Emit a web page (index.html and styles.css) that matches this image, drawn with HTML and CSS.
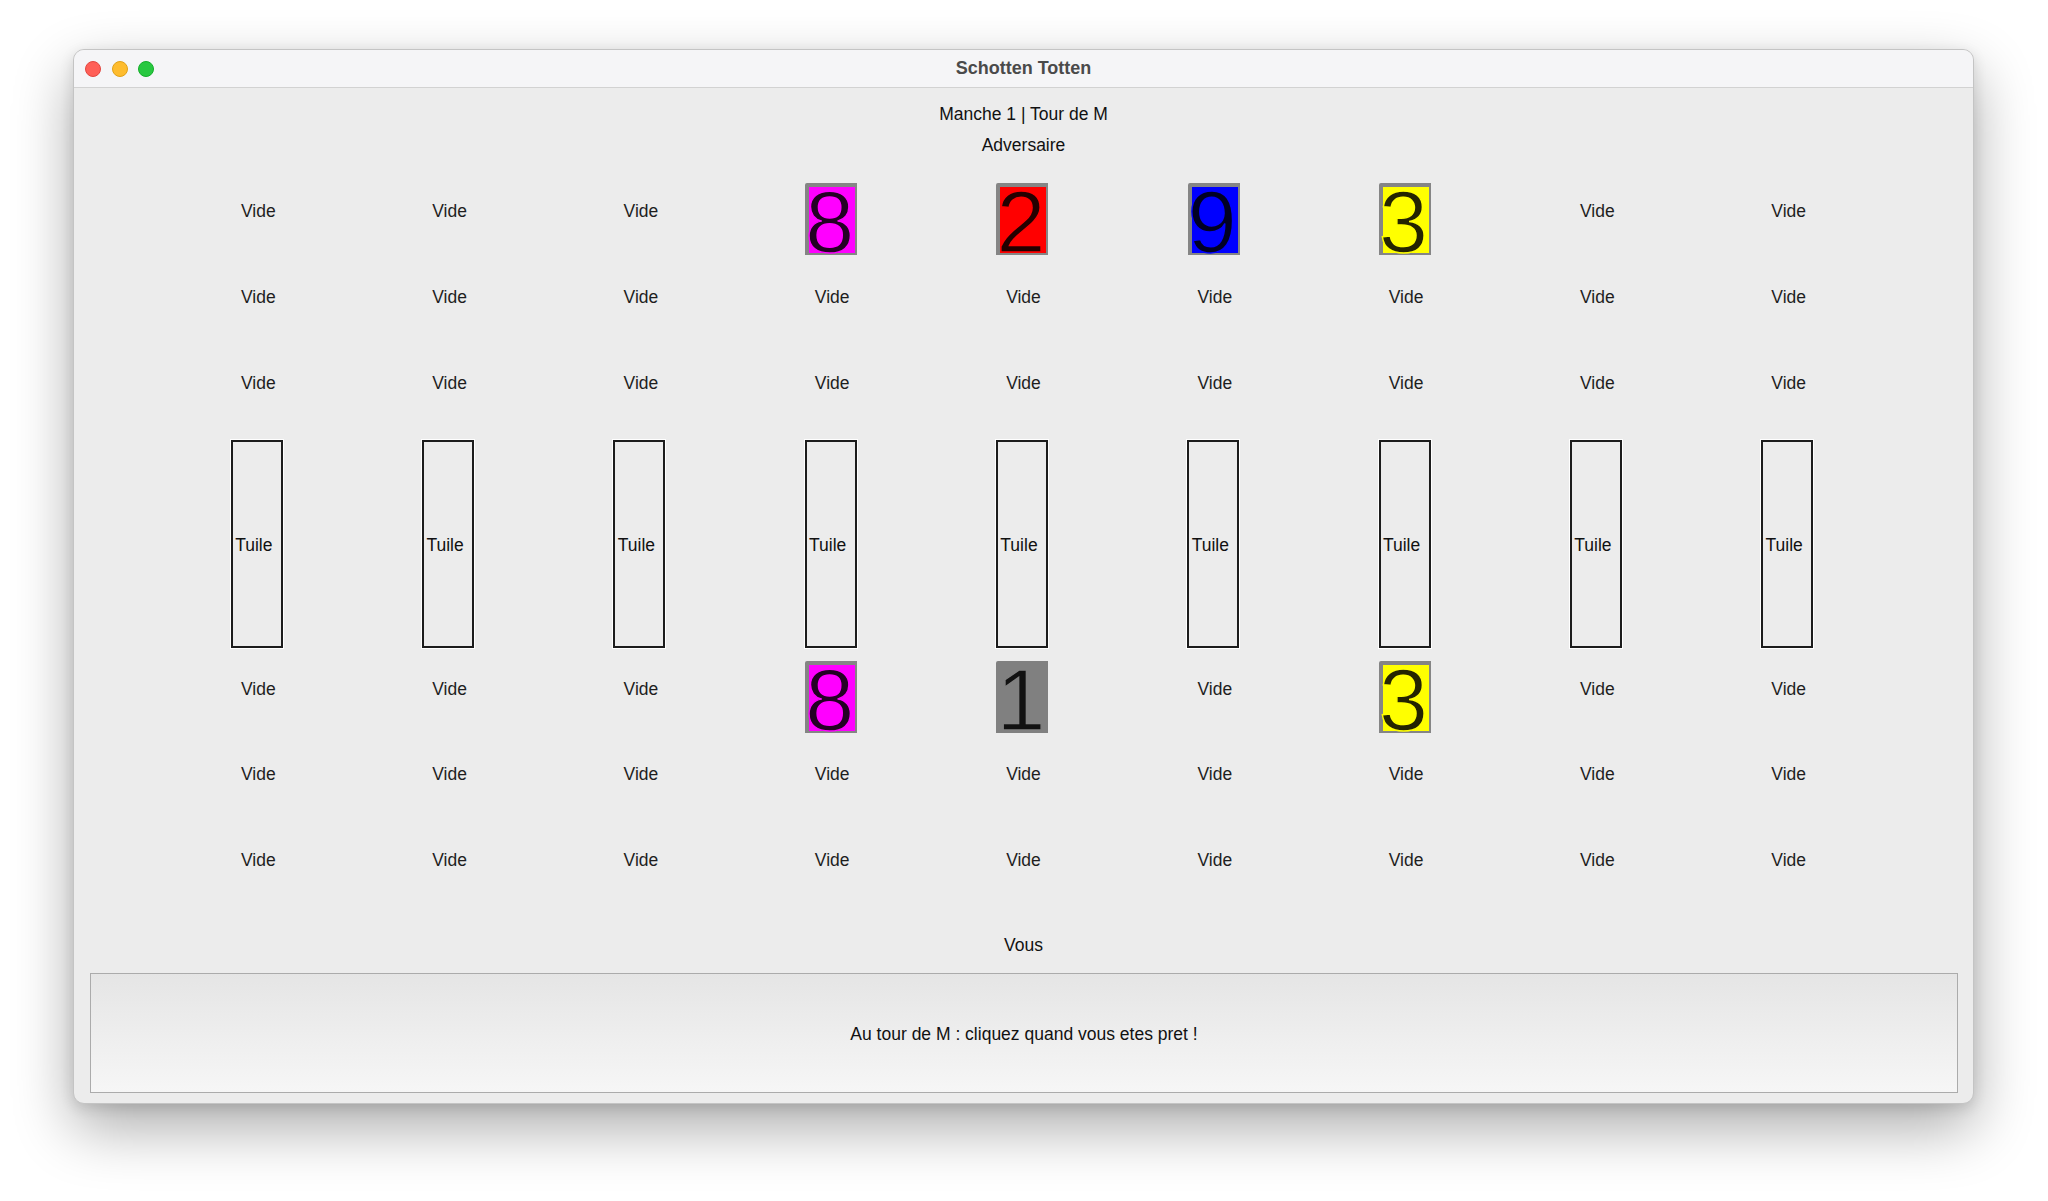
FILE: index.html
```html
<!DOCTYPE html>
<html lang="fr">
<head>
<meta charset="utf-8">
<title>Schotten Totten</title>
<link rel="stylesheet" href="styles.css">
</head>
<body>
<div class="window">
  <div class="titlebar">
    <div class="lights">
      <span class="light red"></span>
      <span class="light yellow"></span>
      <span class="light green"></span>
    </div>
    <div class="title">Schotten Totten</div>
    <div></div>
  </div>
  <div class="content">
    <div class="line">Manche 1 | Tour de M</div>
    <div class="line">Adversaire</div>

    <div class="board opp">
      <div class="cell"><span class="vide">Vide</span></div>
      <div class="cell"><span class="vide">Vide</span></div>
      <div class="cell"><span class="vide">Vide</span></div>
      <div class="cell"><div class="card magenta"><span>8</span></div></div>
      <div class="cell"><div class="card red"><span>2</span></div></div>
      <div class="cell"><div class="card blue"><span>9</span></div></div>
      <div class="cell"><div class="card yellow"><span>3</span></div></div>
      <div class="cell"><span class="vide">Vide</span></div>
      <div class="cell"><span class="vide">Vide</span></div>

      <div class="cell"><span class="vide">Vide</span></div>
      <div class="cell"><span class="vide">Vide</span></div>
      <div class="cell"><span class="vide">Vide</span></div>
      <div class="cell"><span class="vide">Vide</span></div>
      <div class="cell"><span class="vide">Vide</span></div>
      <div class="cell"><span class="vide">Vide</span></div>
      <div class="cell"><span class="vide">Vide</span></div>
      <div class="cell"><span class="vide">Vide</span></div>
      <div class="cell"><span class="vide">Vide</span></div>

      <div class="cell"><span class="vide">Vide</span></div>
      <div class="cell"><span class="vide">Vide</span></div>
      <div class="cell"><span class="vide">Vide</span></div>
      <div class="cell"><span class="vide">Vide</span></div>
      <div class="cell"><span class="vide">Vide</span></div>
      <div class="cell"><span class="vide">Vide</span></div>
      <div class="cell"><span class="vide">Vide</span></div>
      <div class="cell"><span class="vide">Vide</span></div>
      <div class="cell"><span class="vide">Vide</span></div>
    </div>

    <div class="board tiles">
      <div class="tcell"><div class="tile">Tuile</div></div>
      <div class="tcell"><div class="tile">Tuile</div></div>
      <div class="tcell"><div class="tile">Tuile</div></div>
      <div class="tcell"><div class="tile">Tuile</div></div>
      <div class="tcell"><div class="tile">Tuile</div></div>
      <div class="tcell"><div class="tile">Tuile</div></div>
      <div class="tcell"><div class="tile">Tuile</div></div>
      <div class="tcell"><div class="tile">Tuile</div></div>
      <div class="tcell"><div class="tile">Tuile</div></div>
    </div>

    <div class="board me">
      <div class="cell"><span class="vide">Vide</span></div>
      <div class="cell"><span class="vide">Vide</span></div>
      <div class="cell"><span class="vide">Vide</span></div>
      <div class="cell"><div class="card magenta"><span>8</span></div></div>
      <div class="cell"><div class="card gray"><span>1</span></div></div>
      <div class="cell"><span class="vide">Vide</span></div>
      <div class="cell"><div class="card yellow"><span>3</span></div></div>
      <div class="cell"><span class="vide">Vide</span></div>
      <div class="cell"><span class="vide">Vide</span></div>

      <div class="cell"><span class="vide">Vide</span></div>
      <div class="cell"><span class="vide">Vide</span></div>
      <div class="cell"><span class="vide">Vide</span></div>
      <div class="cell"><span class="vide">Vide</span></div>
      <div class="cell"><span class="vide">Vide</span></div>
      <div class="cell"><span class="vide">Vide</span></div>
      <div class="cell"><span class="vide">Vide</span></div>
      <div class="cell"><span class="vide">Vide</span></div>
      <div class="cell"><span class="vide">Vide</span></div>

      <div class="cell"><span class="vide">Vide</span></div>
      <div class="cell"><span class="vide">Vide</span></div>
      <div class="cell"><span class="vide">Vide</span></div>
      <div class="cell"><span class="vide">Vide</span></div>
      <div class="cell"><span class="vide">Vide</span></div>
      <div class="cell"><span class="vide">Vide</span></div>
      <div class="cell"><span class="vide">Vide</span></div>
      <div class="cell"><span class="vide">Vide</span></div>
      <div class="cell"><span class="vide">Vide</span></div>
    </div>

    <div class="line vous">Vous</div>

    <div class="panel">Au tour de M : cliquez quand vous etes pret !</div>
  </div>
</div>
</body>
</html>
```

FILE: styles.css
```css
html, body {
  margin: 0;
  padding: 0;
  background: #ffffff;
  width: 2048px;
  height: 1201px;
  overflow: hidden;
  font-family: "Liberation Sans", Arial, sans-serif;
}

.window {
  margin: 49px 0 0 73px;
  width: 1899px;
  height: 1053px;
  border: 1px solid #c4c4c4;
  border-radius: 11px;
  background: #ececec;
  overflow: hidden;
  box-shadow: 0 24px 60px rgba(0, 0, 0, 0.33), 0 4px 14px rgba(0, 0, 0, 0.12);
  display: flex;
  flex-direction: column;
}

.titlebar {
  height: 37px;
  border-bottom: 1px solid #d2d2d2;
  background: #f5f5f7;
  display: grid;
  grid-template-columns: 1fr auto 1fr;
  align-items: center;
}

.lights {
  display: flex;
  gap: 10.5px;
  padding-left: 11px;
  align-items: center;
  padding-top: 1px;
}

.light {
  width: 16px;
  height: 16px;
  border-radius: 50%;
  box-sizing: border-box;
  display: block;
}

.light.red { background: #ff5f57; border: 1px solid #e2463f; }
.light.yellow { background: #febc2e; border: 1px solid #e1a116; }
.light.green { background: #28c840; border: 1px solid #14ae2a; }

.title {
  font-weight: bold;
  font-size: 18px;
  color: #4a4a4a;
}

.content {
  flex: 1;
  display: flex;
  flex-direction: column;
  padding-top: 11.3px;
}

.line {
  height: 31px;
  line-height: 31px;
  text-align: center;
  font-size: 17.5px;
  color: #111;
}

.board {
  display: grid;
  grid-template-columns: repeat(9, 191.3px);
  justify-content: center;
}

.opp { margin-top: 22.2px; }
.me { margin-top: 12.3px; }

.cell {
  height: 85.6px;
  display: flex;
  flex-direction: column;
  align-items: center;
}

.vide {
  margin-top: 18px;
  line-height: 20px;
  font-size: 17.5px;
  color: #1e1e1e;
}

.card {
  width: 52px;
  height: 72px;
  box-sizing: border-box;
  border-style: solid;
  border-color: #858585;
  border-width: 4px 2px 2px 4px;
  border-radius: 2px 0 0 0;
  margin-right: 2px;
}

.card span {
  display: block;
  margin-left: -4px;
  font-size: 88px;
  line-height: 66px;
  transform: translateY(2px);
  color: rgba(0, 0, 0, 0.86);
}

.card.magenta { background: #ff00ff; }
.card.red { background: #ff0000; }
.card.blue { background: #0000ff; }
.card.yellow { background: #ffff00; }
.card.gray { background: #808080; border-color: #808080; }

.card.magenta span { -webkit-text-stroke: 1.4px #ff00ff; }
.card.red span { -webkit-text-stroke: 1.4px #ff0000; }
.card.blue span { -webkit-text-stroke: 1.4px #0000ff; }
.card.yellow span { -webkit-text-stroke: 1.4px #ffff00; }
.card.gray span { -webkit-text-stroke: 1.4px #808080; }

.tcell {
  height: 208px;
  display: flex;
  justify-content: center;
}

.tile {
  width: 52px;
  height: 208px;
  box-sizing: border-box;
  border: 2px solid #1c1c1c;
  outline: 1px solid #ffffff;
  margin-right: 3px;
  display: flex;
  align-items: center;
  justify-content: center;
  padding-right: 6px;
  padding-top: 2px;
  font-size: 17.5px;
  color: #111;
}

.vous {
  margin-top: 11.2px;
  height: 32px;
  line-height: 32px;
}

.panel {
  margin: 12.7px 15px 0 16px;
  height: 120px;
  box-sizing: border-box;
  border: 1px solid #ababab;
  background: linear-gradient(to bottom, #e5e5e5 0%, #f6f6f6 100%);
  display: flex;
  align-items: center;
  justify-content: center;
  padding-top: 2px;
  font-size: 17.5px;
  color: #111;
}
```
